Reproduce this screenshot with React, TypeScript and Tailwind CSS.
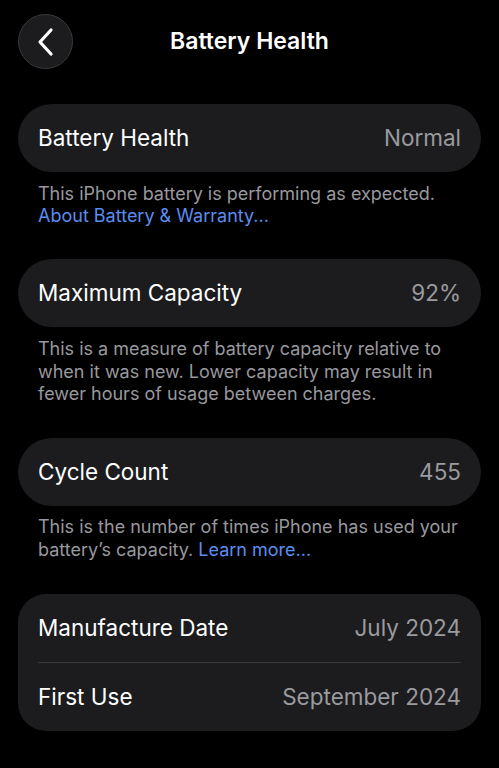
import React from "react";

const font = { fontFamily: "Inter, 'Liberation Sans', sans-serif" };

function Row({ label, value }: { label: string; value: string }) {
  return (
    <div className="flex items-center justify-between h-[68px] px-5">
      <span className="text-[22.5px] text-white">{label}</span>
      <span className="text-[22.5px] text-[#9a9a9f]">{value}</span>
    </div>
  );
}

export default function App() {
  return (
    <div className="w-[499px] h-[768px] bg-black overflow-hidden" style={font}>
      <div className="relative h-[82px] flex items-center justify-center">
        <div className="absolute left-[18px] top-[14px] w-[55px] h-[55px] rounded-full bg-[#1c1c1e] border border-[#3a3a3c] flex items-center justify-center">
          <svg width="26" height="30" viewBox="0 0 26 30" fill="none">
            <path d="M18 3 L7 15 L18 27" stroke="white" strokeWidth="3.2" strokeLinecap="round" strokeLinejoin="round" />
          </svg>
        </div>
        <span className="text-[23px] font-semibold text-white">Battery Health</span>
      </div>

      <div className="px-[18px] pt-[22px] flex flex-col">
        <div className="rounded-full bg-[#1c1c1e]">
          <Row label="Battery Health" value="Normal" />
        </div>
        <p className="px-5 pt-[11px] text-[18px] leading-[22px] text-[#98989e]">
          This iPhone battery is performing as expected.
          <br />
          <span className="text-[#5a8df0]">About Battery &amp; Warranty...</span>
        </p>

        <div className="rounded-full bg-[#1c1c1e] mt-[32px]">
          <Row label="Maximum Capacity" value="92%" />
        </div>
        <p className="px-5 pt-[11px] text-[18px] leading-[22.5px] text-[#98989e]">
          This is a measure of battery capacity relative to when it was new. Lower capacity may result in fewer hours of usage between charges.
        </p>

        <div className="rounded-full bg-[#1c1c1e] mt-[32px]">
          <Row label="Cycle Count" value="455" />
        </div>
        <p className="px-5 pt-[9px] text-[18px] leading-[23px] text-[#98989e]">
          This is the number of times iPhone has used your battery’s capacity.{" "}
          <span className="text-[#5a8df0]">Learn more...</span>
        </p>

        <div className="rounded-[28px] bg-[#1c1c1e] mt-[33px]">
          <Row label="Manufacture Date" value="July 2024" />
          <div className="mx-5 h-px bg-[#3a3a3c]" />
          <Row label="First Use" value="September 2024" />
        </div>
      </div>
    </div>
  );
}
